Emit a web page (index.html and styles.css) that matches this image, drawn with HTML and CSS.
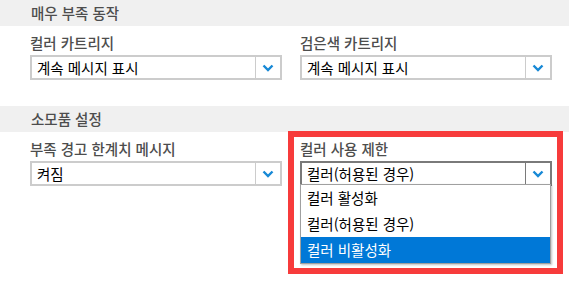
FILE: index.html
```html
<!DOCTYPE html>
<html lang="ko">
  <head>
    <meta charset="UTF-8" />
    <meta name="viewport" content="width=device-width, initial-scale=1.0" />
    <title>소모품 설정</title>
    <link rel="stylesheet" href="styles.css">
  </head>
  <body>
    <!-- Very low behaviour -->
    <div class="section-title">매우 부족 동작</div>
    <div class="section-body">
      <div class="field">
        <label class="field-label">컬러 카트리지</label>
        <div class="select">
          <span class="select-value">계속 메시지 표시</span>
          <span class="select-arrow">
            <svg width="12" height="8" viewBox="0 0 12 8"><polyline points="1.5,1.5 6,6 10.5,1.5" /></svg>
          </span>
        </div>
      </div>
      <div class="field">
        <label class="field-label">검은색 카트리지</label>
        <div class="select">
          <span class="select-value">계속 메시지 표시</span>
          <span class="select-arrow">
            <svg width="12" height="8" viewBox="0 0 12 8"><polyline points="1.5,1.5 6,6 10.5,1.5" /></svg>
          </span>
        </div>
      </div>
    </div>

    <!-- Supplies settings -->
    <div class="section-title">소모품 설정</div>
    <div class="section-body">
      <div class="field">
        <label class="field-label">부족 경고 한계치 메시지</label>
        <div class="select">
          <span class="select-value">켜짐</span>
          <span class="select-arrow">
            <svg width="12" height="8" viewBox="0 0 12 8"><polyline points="1.5,1.5 6,6 10.5,1.5" /></svg>
          </span>
        </div>
      </div>
      <div class="field field-marked">
        <label class="field-label">컬러 사용 제한</label>
        <div class="select select-open">
          <span class="select-value">컬러(허용된 경우)</span>
          <span class="select-arrow">
            <svg width="12" height="8" viewBox="0 0 12 8"><polyline points="1.5,1.5 6,6 10.5,1.5" /></svg>
          </span>
          <ul class="dropdown">
            <li>컬러 활성화</li>
            <li>컬러(허용된 경우)</li>
            <li class="selected">컬러 비활성화</li>
          </ul>
        </div>
        <div class="marker"></div>
      </div>
    </div>
  </body>
</html>
```

FILE: styles.css
```css
/* Settings page with grey section headers and two select columns */
html,
body {
  min-height: 100vh;
}
body {
  margin: 0;
  font-family: "Noto Sans CJK KR", "Noto Sans", sans-serif;
  font-size: 14.5px;
  background-color: #fff;
}
.section-title {
  height: 26px;
  line-height: 26px;
  padding-left: 31px;
  background-color: #f0f0f0;
  color: #4d4d4d;
  font-weight: 500;
}
.section-body {
  display: grid;
  grid-template-columns: 252px 252px;
  column-gap: 18px;
  padding: 7px 30px 26px;
}
.field {
  display: flex;
  flex-direction: column;
  gap: 3px;
}
.field-label {
  line-height: 19px;
  color: #4d4d4d;
  font-weight: 500;
}
.select {
  position: relative;
  display: flex;
  height: 25px;
  box-sizing: border-box;
  border: 2px solid #ccc;
  background-color: #fff;
}
.select-value {
  flex: 1;
  padding-left: 5px;
  line-height: 21px;
  color: #000;
}
.select-arrow {
  width: 24px;
  display: flex;
  align-items: center;
  justify-content: center;
  border-left: 1px solid #ccc;
}
.select-arrow polyline {
  fill: none;
  stroke: #1789d6;
  stroke-width: 2.4;
}
.select-open {
  border-color: #7a7a7a;
}
.select-open .select-arrow {
  border-left-color: #7a7a7a;
}
.dropdown {
  position: absolute;
  top: 100%;
  left: -2px;
  right: -1px;
  margin: 0;
  padding: 0;
  list-style: none;
  border: 1px solid #a0a0a0;
  background-color: #fff;
  box-shadow: 1px 1px 2px rgba(0, 0, 0, 0.25);
  z-index: 2;
}
.dropdown li {
  height: 26px;
  line-height: 26px;
  padding-left: 6px;
  color: #000;
}
.dropdown li.selected {
  background-color: #0078d7;
  color: #fff;
}
.field-marked {
  position: relative;
}
.marker {
  position: absolute;
  left: -12px;
  right: -11px;
  top: -8px;
  bottom: -88px;
  border: 6px solid #f73b3b;
  pointer-events: none;
}
```
